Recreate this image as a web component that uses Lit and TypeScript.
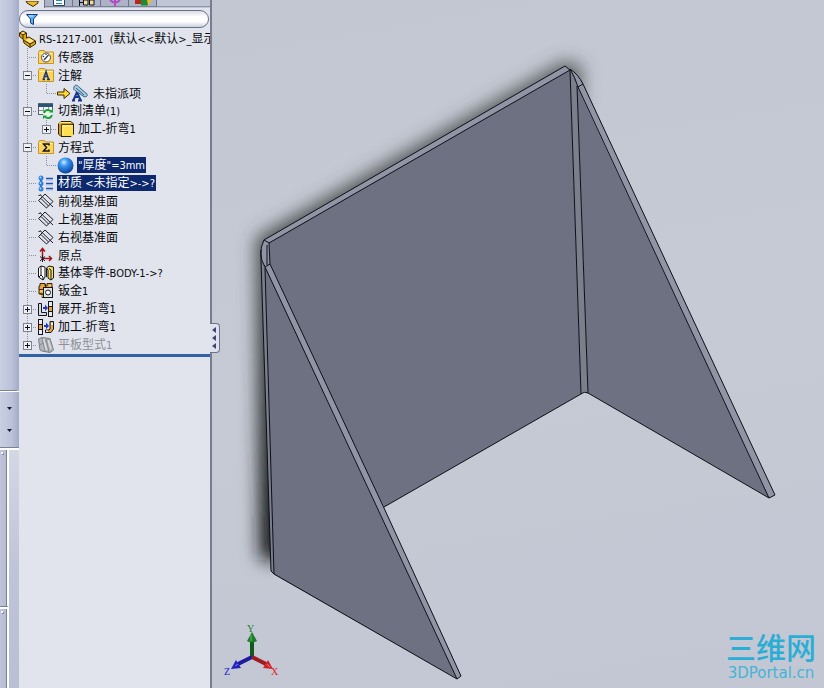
import { LitElement, html, svg, css, nothing } from "lit";
import { customElement, property } from "lit/decorators.js";
import { classMap } from "lit/directives/class-map.js";

type Node = {
  icon: string;
  label: string;
  level: 0 | 1;
  toggle?: "+" | "-";
  selected?: boolean;
  muted?: boolean;
};

const NODES: Node[] = [
  { icon: "sensor", label: "传感器", level: 0 },
  { icon: "note", label: "注解", level: 0, toggle: "-" },
  { icon: "unassigned", label: "未指派项", level: 1 },
  { icon: "cutlist", label: "切割清单(1)", level: 0, toggle: "-" },
  { icon: "solid", label: "加工-折弯1", level: 1, toggle: "+" },
  { icon: "sigma", label: "方程式", level: 0, toggle: "-" },
  { icon: "ball", label: "\"厚度\"=3mm", level: 1, selected: true },
  { icon: "material", label: "材质 <未指定>->?", level: 0, selected: true },
  { icon: "plane", label: "前视基准面", level: 0 },
  { icon: "plane", label: "上视基准面", level: 0 },
  { icon: "plane", label: "右视基准面", level: 0 },
  { icon: "origin", label: "原点", level: 0 },
  { icon: "base", label: "基体零件-BODY-1->?", level: 0 },
  { icon: "sheet", label: "钣金1", level: 0 },
  { icon: "unfold", label: "展开-折弯1", level: 0, toggle: "+" },
  { icon: "fold", label: "加工-折弯1", level: 0, toggle: "+" },
  { icon: "flat", label: "平板型式1", level: 0, toggle: "+", muted: true },
];

const folder = svg`
  <path d="M1.5 4.5 L2.5 2.5 H7.5 L8.5 4 H16.5 V15.5 H1.5 Z" fill="#fbd65c" stroke="#c8922c"/>
  <path d="M2.5 5.5 H15.5" stroke="#fff3b5"/>`;

const part = svg`
  <path d="M.5 3 L4 1 L7.500 3 V8 L10 7 L16.500 11 V14 L11 17.500 L5 13 L4 9 L.5 6.500 Z" fill="#e0a818" stroke="#3b2a00"/>
  <path d="M.5 3 L4 5 L7.500 3 M4 5 V9 M5 10.500 L11 14 L16.500 11 M11 14 V17" fill="none" stroke="#3b2a00"/>
  <path d="M2 3 L4 2 L6 3 L4 4 Z M6.500 10 L10 8 L15 11 L11 13 Z" fill="#ffe986"/>`;

const ICONS: Record<string, unknown> = {
  part,
  sensor: svg`${folder}
    <circle cx="9" cy="9.500" r="4.500" fill="#fff" stroke="#4b4b55"/>
    <path d="M7 12 L11.500 7 M6 8 L7 9 M9 6 V7" stroke="#30405c" stroke-width="1.300"/>`,
  note: svg`${folder}
    <path d="M5.500 13.500 H8 M10 13.500 H13 M6.500 13 L9 5.500 L11.500 13 M7.500 10.500 H10.500" fill="none" stroke="#17357c" stroke-width="1.500"/>`,
  sigma: svg`${folder}
    <path d="M12 7.500 V6 H6.500 L9.500 9.500 L6.500 13 H12 V11.500" fill="none" stroke="#14141c" stroke-width="1.500"/>`,
  cutlist: svg`
    <rect x="1.500" y="1.500" width="14" height="11" fill="#eef3f2" stroke="#56656f"/>
    <path d="M1 2 H16 V5 H1 Z" fill="#2c5374"/>
    <path d="M2 8.500 H15 M6.500 5 V12 M11.500 5 V12" stroke="#7e969f"/>
    <circle cx="11" cy="12" r="5" fill="#e4fbe6"/>
    <path d="M7 11 A4 4 0 0 1 14 9.500 M15 13 A4 4 0 0 1 8 14.500" fill="none" stroke="#1e9b3b" stroke-width="2"/>
    <path d="M12 10.500 H16 V7 Z M10 13.500 H6 V17 Z" fill="#1e9b3b"/>`,
  solid: svg`
    <path d="M1.500 4 L4 1.500 H14 L16.500 4 V14 L14 16.500 H4 L1.500 14 Z" fill="#d99c12" stroke="#2f2200"/>
    <rect x="5" y="5" width="11" height="11" fill="#ffdf52"/>
    <path d="M4.500 16 V4.500 H16" stroke="#5c4200" fill="none"/>
    <path d="M2 3.500 L4 2.500 H14" stroke="#fff0a0" fill="none"/>
    <path d="M6 15 V6 H15" stroke="#fff3a8" fill="none"/>`,
  ball: svg`
    <defs><radialGradient id="b" cx=".4" cy=".3" r=".7">
      <stop offset="0" stop-color="#c9eaff"/><stop offset=".35" stop-color="#3d98f0"/><stop offset="1" stop-color="#0a3fa0"/>
    </radialGradient></defs>
    <circle cx="8.500" cy="9.500" r="8" fill="url(#b)"/>`,
  material: svg`
    <path d="M4 2 V16" stroke="#2a6fc8" stroke-width="2"/>
    <circle cx="4" cy="4" r="2.500" fill="#2f7fe0"/><circle cx="4" cy="9.500" r="2.500" fill="#2f7fe0"/><circle cx="4" cy="15" r="2.500" fill="#2f7fe0"/>
    <circle cx="3.500" cy="3.500" r="1" fill="#a9d6ff"/><circle cx="3.500" cy="9" r="1" fill="#a9d6ff"/><circle cx="3.500" cy="14.500" r="1" fill="#a9d6ff"/>
    <path d="M9 4.500 H16 M9 9.500 H16 M9 14.500 H16" stroke="#2452b4" stroke-width="1.500"/>
    <path d="M9 6 H16 M9 11 H16 M9 16 H16" stroke="#9db8e2"/>`,
  plane: svg`
    <path d="M1.500 8.500 L8 2 L16 9.500 L9.500 16 Z M3.500 3 L16 15 M1.500 3.500 L4 3 M5 5.500 L2 8 M4.500 7 L11.500 14" fill="none" stroke="#1c1c26"/>`,
  origin: svg`
    <path d="M5.500 14 V3 M3 5.500 L5.500 2.500 L8 5.500 M6 12.500 H14 M12 10 L14.500 12.500 L12 15" fill="none" stroke="#a3151c" stroke-width="1.500"/>
    <path d="M3 10.500 L8 15 M8 10.500 L3 15 M5.500 9.500 V16" stroke="#1c1c26"/>`,
  base: svg`
    <path d="M1.500 4 L4 2 L8 3 V13 L6 16 L1.500 13 Z" fill="#fff" stroke="#14141c"/>
    <path d="M4 2 V11 L6 13 V16 M4 11 L2 13" fill="none" stroke="#14141c"/>
    <path d="M9.500 4 L12 2 L16.500 3 V14 L14 16 L11 14 V6 Z" fill="#f7dc5a" stroke="#14141c"/>
    <path d="M12 4.500 L14 6 V16 M9.500 4 V13" fill="none" stroke="#14141c"/>`,
  sheet: svg`
    <path d="M3 1.500 H8 V4 H10 V1.500 H15 V7 H10 V15.500 H5 V12 H2 V4 H3 Z" fill="#e6a63a" stroke="#3a2500"/>
    <path d="M2 7.500 H9 M8.500 2 V8 M3 12 H6" stroke="#3a2500"/>
    <rect x="6.500" y="5.500" width="9" height="10" fill="#dfe3ea" stroke="#14141c"/>
    <circle cx="11" cy="10.500" r="2.500" fill="#fff" stroke="#14141c"/>
    <path d="M3 9 H6 M4 14 H6 M12 3.500 H14" stroke="#ffe2a0"/>`,
  unfold: svg`
    <path d="M1.500 3.500 H4.500 V12.500 H9.500 V15.500 H1.500 Z" fill="#d4dae4" stroke="#14141c"/>
    <path d="M6 7 H8 V4.500 L11 8 L8 11 V9 H6 Z" fill="#2138c0"/>
    <rect x="11.500" y="1.500" width="4" height="15" fill="#e8ebf0" stroke="#14141c"/>
    <path d="M12 6.500 H15 V12 H12 Z" fill="#f0a22c"/>
    <path d="M12 6.500 H15 M12 11.500 H15" stroke="#14141c"/>`,
  fold: svg`
    <rect x="1.500" y="1.500" width="4" height="15" fill="#e8ebf0" stroke="#14141c"/>
    <path d="M2 6.500 H5 V12 H2 Z" fill="#f0a22c"/>
    <path d="M2 6.500 H5 M2 11.500 H5" stroke="#14141c"/>
    <path d="M7 7 H9 V4.500 L12 8 L9 11 V9 H7 Z" fill="#2138c0"/>
    <path d="M13 3.500 H16.500 V11 L14 14.500 H8.500 V12 H12 L13 11 Z" fill="#e8a63c" stroke="#14141c"/>
    <path d="M14 4.500 H16 V7 H14 Z M9 12.500 H11 V14 H9 Z" fill="#e8ebf0"/>`,
  flat: svg`
    <path d="M1.500 3 L5 1.500 L13 2.500 L16.500 14 L13 16.500 L5 15 L3 14 Z" fill="#b4b6bb" stroke="#7c7e85"/>
    <path d="M5 2 L8 15 M9 2.500 L12 16 M3 9 L12 3" stroke="#85878d"/>
    <path d="M6.500 3 L9.500 14 M11 4 L14 13" stroke="#dcdde0" stroke-width="1.500"/>`,
};

const wideUnassigned = html`<svg class="wide" width="33" height="18" viewBox="0 0 33 18">
  <path d="M.5 8 H7 V4.500 L13 9.500 L7 14.500 V11 H.5 Z" fill="#ffd735" stroke="#3b2a00"/>
  <path d="M15 16.500 H18 M21 16.500 H25 M16.500 16 L20 8 L23.500 16 M18 13 H22.500" fill="none" stroke="#16388c" stroke-width="2"/>
  <path d="M17 3 C18 0 21 1 23 4 L30 10 C31 12 29 14 26 12 L19 7 C17 6 16 5 17 3 Z" fill="#a9cbe0" stroke="#2f6285"/>
  <path d="M19 4 L27 11" stroke="#2f6285"/>
</svg>`;

@customElement("tree-label")
class TreeLabel extends LitElement {
  @property() text = "";
  static styles = css`
    :host { display: block; white-space: pre; font: 12px/14px "Noto Sans CJK SC", sans-serif; }
    .latin { font: 11px/14px "DejaVu Sans Condensed", "Noto Sans", sans-serif; }
  `;
  render() {
    const runs = this.text.match(/[\x00-\x7f]+|[^\x00-\x7f]+/g) ?? [];
    return runs.map((r) => (r.charCodeAt(0) < 128 ? html`<span class="latin">${r}</span>` : html`<span>${r}</span>`));
  }
}

@customElement("feature-tree")
class FeatureTree extends LitElement {
  static styles = css`
    :host { display: block; overflow: hidden; border-bottom: 3px solid #2f62a6; }
    ul { list-style: none; margin: 0; padding: 0; }
    .row { display: flex; align-items: center; height: 18px; }
    .cell { display: grid; flex: none; width: 18px; height: 18px; align-items: center; }
    .cell.sub { width: 20px; }
    .cell > * { grid-area: 1 / 1; }
    .guides { width: 100%; height: 18px; display: block; }
    .guides path { stroke: #8b90a0; stroke-dasharray: 1 1; fill: none; shape-rendering: crispEdges; }
    .toggle { width: 9px; height: 9px; margin: 0 0 0 4px; padding: 0; border: 1px solid #7d828f; background: #eef0f4; display: block; }
    .sub .toggle { margin-left: 5px; }
    .toggle svg { display: block; }
    .icon { flex: none; display: block; margin-right: 2px; }
    .wide { flex: none; display: block; margin-right: 2px; }
    tree-label { padding: 0 1px; color: #08080c; }
    .root tree-label { padding: 0; }
    .selected tree-label { background: #0c286e; color: #fff; }
    .muted tree-label { color: #8c9098; }
  `;

  private toggle(kind: "+" | "-") {
    return html`<button class="toggle" aria-label=${kind === "+" ? "展开" : "折叠"}>
      <svg width="7" height="7" shape-rendering="crispEdges"><path d=${kind === "+" ? "M1 3.5H6M3.5 1V6" : "M1 3.5H6"} stroke="#101018"/></svg>
    </button>`;
  }

  private row(n: Node, last: boolean) {
    const bottom = last ? 9 : 18;
    const sub = n.level === 1;
    return html`<li class=${classMap({ row: true, selected: !!n.selected, muted: !!n.muted })}>
      <span class="cell">
        <svg class="guides"><path d=${`M8.5 0V${bottom}${sub ? "" : "M10 9.5H18"}`}/></svg>
        ${!sub && n.toggle ? this.toggle(n.toggle) : nothing}
      </span>
      ${sub
        ? html`<span class="cell sub">
            <svg class="guides"><path d="M9.5 0V9M10 9.5H20"/></svg>
            ${n.toggle ? this.toggle(n.toggle) : nothing}
          </span>`
        : nothing}
      ${n.icon === "unassigned"
        ? wideUnassigned
        : html`<svg class="icon" width="18" height="18" viewBox="0 0 18 18">${ICONS[n.icon]}</svg>`}
      <tree-label text=${n.label}></tree-label>
    </li>`;
  }

  render() {
    return html`<ul>
      <li class="row root">
        <svg class="icon" width="18" height="18" viewBox="0 0 18 18">${ICONS.part}</svg>
        <tree-label text="RS-1217-001  (默认<<默认>_显示"></tree-label>
      </li>
      ${NODES.map((n, i) => this.row(n, i === NODES.length - 1))}
    </ul>`;
  }
}

@customElement("model-view")
class ModelView extends LitElement {
  static styles = css`
    :host { display: block; position: relative; overflow: hidden; background: linear-gradient(170deg, #c3c7d2, #c6cad5 50%, #c3c7d3); }
    .scene { display: block; width: 100%; height: 100%; }
    .edge { stroke: #0d0f17; fill: none; stroke-linejoin: round; }
    .face { fill: #6e7181; }
    .rim { fill: #9094a4; }
    .bend { fill: #7b7e8b; }
    .triad { position: absolute; left: 8px; bottom: 8px; }
    .triad text { font: 10px "Liberation Serif", serif; }
    .mark { position: absolute; right: 8px; bottom: 6px; color: #2aaed5; text-align: center; }
    .name { font: 500 30px/36px "Noto Sans CJK SC", sans-serif; }
    .site { font: 15px/18px "DejaVu Sans", sans-serif; color: #45b4d6; }
  `;
  render() {
    return html`
      <svg class="scene" viewBox="212 0 612 688" role="img" aria-label="RS-1217-001">
        <defs>
          <filter id="soft" x="-20%" y="-20%" width="140%" height="140%"><feGaussianBlur stdDeviation="9"/></filter>
          <linearGradient id="depth" x1="0" y1="0" x2="0" y2="1">
            <stop offset="0" stop-color="#454a49" stop-opacity=".85"/>
            <stop offset=".4" stop-color="#404544" stop-opacity=".95"/>
            <stop offset="1" stop-color="#101212"/>
          </linearGradient>
          <clipPath id="outside"><path d="M212 0 H824 V500 L588 393 L581 394 L384 507 L273 574 V688 H212 Z"/></clipPath>
        </defs>
        <g clip-path="url(#outside)">
          <path filter="url(#soft)" fill="url(#depth)" d="M256 238 L564 61 L582 66 L580 110 L320 280 L300 560 L260 560 Z"/>
        </g>
        <path class="face" d="M269 243 L570 70 L581 394 L384 507 L350 440 L269 265 Z"/>
        <path class="face" d="M577 86 L588 393 L769 498 Z"/>
        <path class="bend" d="M570 70 L577 86 L588 393 L584 392 L581 394 Z"/>
        <path class="rim" d="M264 240 L565 66 L570 70 L269 243 Z"/>
        <path class="rim" d="M583 84 L775 495 L769 498 L578 87 Z"/>
        <path class="rim" d="M570 69 Q578 74 583 84 L578 87 Q575 77 570 69 Z"/>
        <path class="face" d="M265 267 L457 679 L273 574 Z"/>
        <path class="rim" d="M270 264 L384 508 L461 676 L457 679 L265 267 Z"/>
        <path class="bend" d="M261 258 L265 267 L274 574 L271 571 Z"/>
        <path class="rim" d="M264 240 L269 243 L270 264 L265 267 Q257 254 264 240 Z"/>
        <path class="edge" d="M264 240 L565 66 L570 70 L269 243 Z M570 70 L581 394 L384 507 M581 394 Q584 391 588 393 L769 498 L775 495 L583 84 Q578 74 570 69 Q575 77 578 87 L769 498 M577 86 L588 393 M578 87 L583 84"/>
        <path class="edge" d="M264 240 Q257 254 265 267 L457 679 L461 676 L384 508 L270 264 L265 267 M269 243 L270 264 M267 245 V265 M261 250 V260 L271 571 L274 574 L265 268 M274 574 L457 679"/>
      </svg>
      <svg class="triad" width="60" height="60" viewBox="220 620 60 60" aria-hidden="true">
        <path d="M252 657 V638" stroke="#12591a" stroke-width="4"/>
        <path d="M252 657 L238 664" stroke="#1c1c9c" stroke-width="4"/>
        <path d="M252 657 L266 664" stroke="#9c1c20" stroke-width="4"/>
        <path d="M252 632 L257 641 Q252 644 247 641 Z" fill="#1e7c2a"/>
        <path d="M251 635 V641" stroke="#5fbd68"/>
        <path d="M231 669 L236 660 L241 668 Z" fill="#2222c0"/>
        <path d="M273 669 L268 660 L263 668 Z" fill="#d02428"/>
        <path d="M235 666 L238 664" stroke="#7d80f0"/><path d="M267 664 L270 667" stroke="#f07a7a"/>
        <text x="247" y="632" fill="#14802a">Y</text>
        <text x="271" y="675" fill="#e02020">X</text>
        <text x="224" y="675" fill="#2020c8">Z</text>
      </svg>
      <div class="mark"><div class="name">三维网</div><div class="site">3DPortal.cn</div></div>
    `;
  }
}

@customElement("app-root")
class AppRoot extends LitElement {
  static styles = css`
    :host { display: grid; grid-template-columns: 19px 191px 1fr; min-height: 100vh; overflow: hidden; background: #e1e4ec; }
    button { padding: 0; margin: 0; border: 0; background: none; }
    .rail { display: flex; flex-direction: column; background: linear-gradient(90deg, #c9cfe2, #bcc3d9 60%, #a4abc6); }
    .rail-top { height: 390px; border-bottom: 1px solid #7d8291; margin-right: 2px; }
    .rail-menu { display: flex; flex-direction: column; align-items: center; box-sizing: border-box; height: 57px; border-top: 1px solid #fff; border-bottom: 1px solid #7d8291; padding: 5px 0; }
    .rail-menu button { flex: 1; display: grid; place-items: center; width: 19px; }
    .rail-low { flex: 1; display: flex; flex-direction: column; background: linear-gradient(#d3d8e5, #bfc5d8 50%, #b9c0d3); border-top: 2px solid #fff; }
    .dock { box-sizing: border-box; width: 9px; height: 157px; border-right: 2px solid #fff; background: linear-gradient(90deg, #c0c5da, #b4bad0); box-shadow: inset -1px 0 #7d8291; border-bottom: 1px solid #7d8291; padding: 2px 0 0 1px; }
    .dock.last { flex: 1; border-top: 2px solid #fff; border-bottom: 0; }
    .grip { display: block; width: 2px; height: 2px; background: #f4f6fa; box-shadow: 1px 1px #868ca4; }
    .panel { display: flex; flex-direction: column; min-width: 0; background: #e1e4ec; }
    .tabs { display: flex; height: 8px; background: #c1c6d5; overflow: hidden; margin-bottom: 2px; }
    .tabs button { box-sizing: border-box; width: 28px; height: 7px; background: #adb3c7; border-right: 1px solid #6c7288; border-bottom: 1px solid #7a8096; overflow: hidden; }
    .tabs button:first-child { width: 26px; height: 8px; background: #e1e4ec; border-bottom: 0; }
    .tabs svg { display: block; margin: 0 auto; }
    .tabs::after { content: ""; flex: 1; height: 7px; box-sizing: border-box; border-bottom: 1px solid #8f95a8; }
    .filter { display: flex; align-items: center; box-sizing: border-box; height: 18px; margin: 0 1px 2px 0; padding: 0 8px 0 6px; border: 1px solid #6a7188; border-radius: 9px; background: linear-gradient(#d9dce5, #fff 35%, #fff 65%, #cdd1dd); }
    .filter input { flex: 1; min-width: 0; border: 0; padding: 0; background: transparent; outline: 0; font: 11px "Noto Sans", sans-serif; }
    .main { display: grid; position: relative; min-width: 0; border-left: 2px solid #767d93; }
    .handle { position: absolute; left: -2px; top: 323px; width: 10px; height: 30px; display: grid; place-items: center; background: #dfe2ee; border: 1px solid #6d7287; border-left: 0; border-radius: 0 4px 4px 0; }
  `;
  render() {
    const arrow = html`<svg width="5" height="3"><path d="M0 0H5L2.5 3Z" fill="#151a33"/></svg>`;
    return html`
      <aside class="rail">
        <div class="rail-top"></div>
        <div class="rail-menu">
          <button aria-label="菜单一">${arrow}</button>
          <button aria-label="菜单二">${arrow}</button>
        </div>
        <div class="rail-low">
          <div class="dock"><span class="grip"></span></div>
          <div class="dock last"><span class="grip"></span></div>
        </div>
      </aside>
      <section class="panel">
        <nav class="tabs">
          <button aria-label="设计树"><svg width="14" height="6"><path d="M1 0H13V2L8 5.500L2 2Z" fill="#f0bd28" stroke="#3b2a00"/></svg></button>
          <button aria-label="属性"><svg width="14" height="6"><path d="M1.500 0V5.500H12.500V0" fill="#fff" stroke="#1c4566"/><path d="M4 .5H10M4 3.500H10" stroke="#2e86b6"/></svg></button>
          <button aria-label="配置"><svg width="18" height="6"><path d="M1.500 6V0M1 2.500H6" stroke="#14141c" fill="none"/><path d="M5.500 0H10V5H5.500ZM11.500 0H16V5H11.500Z" fill="#f1dda0" stroke="#14141c"/></svg></button>
          <button aria-label="尺寸"><svg width="14" height="6"><path d="M2 0Q7 5 12 0M7 0V6" stroke="#b44bc4" stroke-width="2" fill="none"/></svg></button>
          <button aria-label="外观"><svg width="18" height="6"><path d="M1 0H8V4H1Z" fill="#b8261c"/><path d="M7 0H14V5.500H7Z" fill="#1f8a34"/><path d="M13 0H17V2L14 5Z" fill="#e8bd28"/></svg></button>
        </nav>
        <label class="filter">
          <svg width="12" height="12" viewBox="0 0 12 12"><path d="M.5 1.500H11.500L7.500 6V11.500L4.500 10V6Z" fill="#5db1ec" stroke="#163f86"/><path d="M3 3H7" stroke="#d6f0ff"/></svg>
          <input type="text" aria-label="筛选" />
        </label>
        <feature-tree></feature-tree>
      </section>
      <main class="main">
        <model-view></model-view>
        <button class="handle" aria-label="收起面板">
          <svg width="5" height="24"><path d="M4 1V7L0 4ZM4 9V15L0 12ZM4 17V23L0 20Z" fill="#40466c"/></svg>
        </button>
      </main>
    `;
  }
}
